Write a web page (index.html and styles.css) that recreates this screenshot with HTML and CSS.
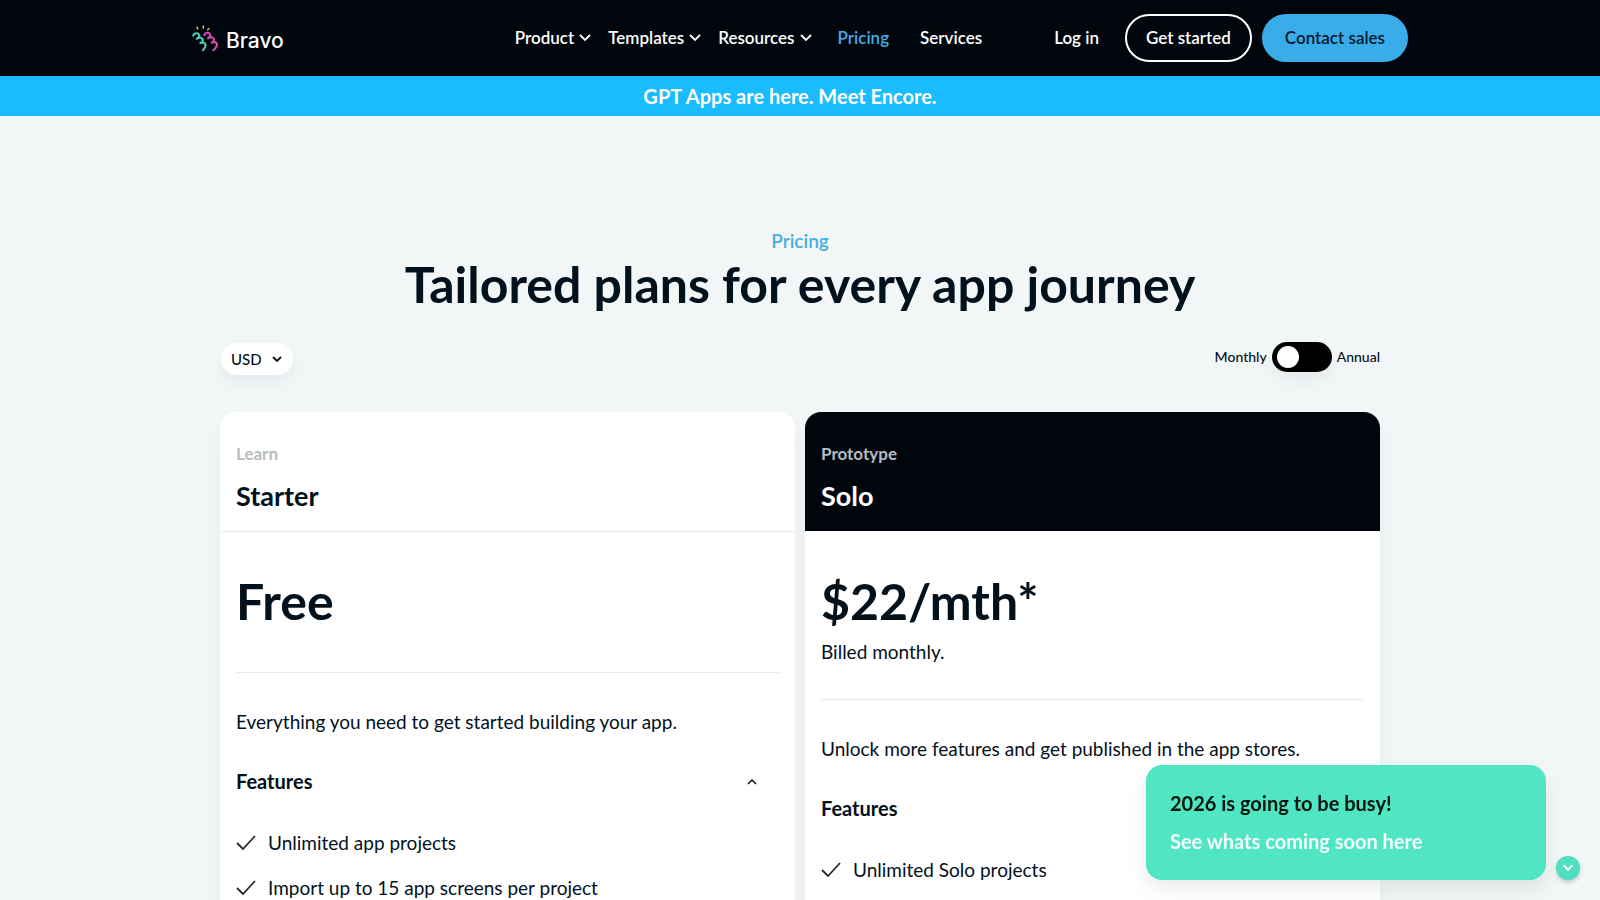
FILE: index.html
```html
<!DOCTYPE html>
<html lang="en">
<head>
<meta charset="utf-8">
<meta name="viewport" content="width=device-width, initial-scale=1">
<title>Bravo Pricing</title>
<link rel="stylesheet" href="styles.css">
</head>
<body>
<header class="header">
  <div class="header-inner">
    <a class="logo" href="#">
      <svg class="logo-mark" viewBox="0 0 28 28" fill="none" stroke-width="2.100" stroke-linecap="round" stroke-linejoin="round" aria-hidden="true">
        <path stroke="#d9b24a" stroke-width="1.600" d="M5 3.200l.8 1.600M11.300 2v2M16.800 4.600l-1 1.200"/>
        <path stroke="#4fcdb0" d="M1.200 11.500c1.200-2.700 5-2.900 5.900-.6.700 1.900-1 3.200-2.300 3.800 2.200-1.900 5.800-1.100 6 1 .2 1.900-1.300 2.900-2.400 3.400 2.200-1.200 5.200-.4 5.200 2.100 0 2-1.500 3.600-2.700 5"/>
        <path stroke="#d34cb4" d="M12.200 11c1.200-2.700 5-2.900 5.900-.6.700 1.900-1 3.200-2.100 3.900 2.200-1.900 5.800-1.100 6 1 .2 1.900-1.300 2.900-2.200 3.400 2.200-1.200 5.200-.4 5.200 2.100 0 2-1.900 3.800-3.600 5.400"/>
      </svg>
      <span>Bravo</span>
    </a>
    <nav class="nav">
      <button class="nav-menu" type="button">Product <svg class="chev" viewBox="0 0 12 8" aria-hidden="true"><path d="M1 1l5 5 5-5"/></svg></button>
      <button class="nav-menu" type="button">Templates <svg class="chev" viewBox="0 0 12 8" aria-hidden="true"><path d="M1 1l5 5 5-5"/></svg></button>
      <button class="nav-menu" type="button">Resources <svg class="chev" viewBox="0 0 12 8" aria-hidden="true"><path d="M1 1l5 5 5-5"/></svg></button>
      <a class="nav-link current" href="#">Pricing</a>
      <a class="nav-link" href="#">Services</a>
    </nav>
    <a class="login" href="#">Log in</a>
    <div class="actions">
      <a class="pill outline" href="#">Get started</a>
      <a class="pill solid" href="#">Contact sales</a>
    </div>
  </div>
</header>
<a class="banner" href="#">GPT Apps are here. Meet Encore.</a>
<main class="main">
  <p class="eyebrow">Pricing</p>
  <h1 class="title">Tailored plans for every app journey</h1>
  <div class="controls">
    <div class="currency">
      <select class="currency-select" aria-label="Currency"><option>USD</option><option>EUR</option></select>
      <svg class="currency-chev" viewBox="0 0 10 7" aria-hidden="true"><path d="M1 1l4 4 4-4"/></svg>
    </div>
    <div class="billing">
      <label for="annual">Monthly</label>
      <input class="switch" id="annual" type="checkbox" role="switch" aria-label="Annual billing">
      <label for="annual">Annual</label>
    </div>
  </div>
  <div class="plans">
    <section class="plan">
      <div class="plan-head">
        <p class="plan-kind">Learn</p>
        <h2 class="plan-name">Starter</h2>
      </div>
      <div class="plan-body">
        <div class="plan-price"><p class="price">Free</p></div>
        <p class="plan-text">Everything you need to get started building your app.</p>
        <button class="features" type="button" aria-expanded="true">Features <svg class="up" viewBox="0 0 10 7" aria-hidden="true"><path d="M1 6l4-4 4 4"/></svg></button>
        <ul class="list">
          <li><svg class="check" viewBox="0 0 20 16" aria-hidden="true"><path d="M1 8l6 6L19 1"/></svg>Unlimited app projects</li>
          <li><svg class="check" viewBox="0 0 20 16" aria-hidden="true"><path d="M1 8l6 6L19 1"/></svg>Import up to 15 app screens per project</li>
        </ul>
      </div>
    </section>
    <section class="plan">
      <div class="plan-head dark">
        <p class="plan-kind">Prototype</p>
        <h2 class="plan-name">Solo</h2>
      </div>
      <div class="plan-body">
        <div class="plan-price"><p class="price">$22/mth*</p><p>Billed monthly.</p></div>
        <p class="plan-text">Unlock more features and get published in the app stores.</p>
        <button class="features" type="button" aria-expanded="true">Features <svg class="up" viewBox="0 0 10 7" aria-hidden="true"><path d="M1 6l4-4 4 4"/></svg></button>
        <ul class="list">
          <li><svg class="check" viewBox="0 0 20 16" aria-hidden="true"><path d="M1 8l6 6L19 1"/></svg>Unlimited Solo projects</li>
        </ul>
      </div>
    </section>
  </div>
</main>
<aside class="notice">
  <div class="toast">
    <p>2026 is going to be busy!</p>
    <a href="#">See whats coming soon here</a>
  </div>
  <button class="toast-close" type="button" aria-label="Minimise"><svg viewBox="0 0 10 7" aria-hidden="true"><path d="M1 1l4 4 4-4"/></svg></button>
</aside>
</body>
</html>
```
FILE: styles.css
```css
* { box-sizing: border-box; }
body {
  margin: 0;
  height: 100vh;
  overflow: hidden;
  background: #f3f6f7;
  color: #02111b;
  font: 400 19px/27px Lato, "Open Sans", sans-serif;
}
p, h1, h2, ul { margin: 0; padding: 0; }
a { color: inherit; text-decoration: none; }
button { border: 0; padding: 0; background: none; color: inherit; font: inherit; cursor: pointer; }
svg { fill: none; stroke: currentColor; flex: none; }

.header { background: #01060d; color: #fff; font-size: 17px; font-weight: 600; line-height: 22px; }
.header-inner {
  display: flex;
  align-items: center;
  max-width: 1216px;
  height: 76px;
  margin: 0 auto;
}
.logo { display: flex; align-items: center; gap: 6px; font: 500 21px/28px Inter, sans-serif; }
.logo-mark { width: 28px; height: 28px; }
.logo span { padding-top: 5px; }
.nav { display: flex; align-items: center; margin-left: auto; }
.nav-menu { display: flex; align-items: center; gap: 5px; margin-right: 17px; }
.chev { width: 12px; height: 8px; stroke-width: 1.8; }
.nav-link { margin-left: 9px; margin-right: 22px; }
.current { color: #45aee9; }
.login { margin-left: 50px; margin-right: 26px; }
.actions { display: flex; gap: 10px; }
.pill { height: 48px; padding: 11px 19px; border: 2px solid #fff; border-radius: 24px; }
.solid { background: #39acea; border-color: #39acea; color: #02182b; padding: 11px 21px; }

.banner { display: block; background: #1abcfe; color: #fff; text-align: center; padding-right: 20px; font-size: 20px; font-weight: 700; line-height: 40px; }

.main { max-width: 1160px; margin: 0 auto; padding-top: 111px; }
.eyebrow { color: #45aee0; text-align: center; font-weight: 600; }
.title { text-align: center; font-size: 50px; line-height: 60px; font-weight: 700; }
.controls { display: flex; justify-content: space-between; align-items: flex-start; padding-top: 28px; height: 98px; }
.currency { display: grid; align-items: center; margin-left: 1px; margin-top: 1px; }
.currency-select {
  grid-area: 1 / 1;
  appearance: none;
  width: 72px;
  height: 32px;
  padding: 0 10px;
  border: 0;
  border-radius: 16px;
  background: #fff;
  color: inherit;
  font: 500 15px/24px Lato, sans-serif;
  box-shadow: 0 8px 16px rgba(20, 20, 40, .05);
}
.currency-chev { grid-area: 1 / 1; justify-self: end; margin-right: 11px; width: 10px; height: 7px; stroke-width: 1.8; pointer-events: none; }
.billing { display: flex; align-items: center; gap: 5px; font-size: 14px; font-weight: 500; line-height: 20px; }
.switch {
  appearance: none;
  width: 60px;
  height: 30px;
  margin: 0;
  padding: 4px 5px;
  border-radius: 15px;
  background: #000;
  box-shadow: 0 8px 16px rgba(20, 20, 40, .05);
}
.switch::before { content: ""; display: block; width: 22px; height: 22px; border-radius: 50%; background: #fff; }
.switch:checked::before { margin-left: auto; }

.plans { display: grid; grid-template-columns: 1fr 1fr; gap: 10px; }
.plan { background: #fff; border-radius: 16px; box-shadow: 0 12px 20px rgba(20, 20, 40, .04); overflow: hidden; }
.plan-head { padding: 30px 16px 15px; height: 120px; border-bottom: 1px solid #e8ebec; }
.plan-kind { font-size: 17px; line-height: 24px; font-weight: 700; color: #b5bdc2; }
.plan-name { font-size: 27px; line-height: 36px; font-weight: 700; margin-top: 12px; }
.dark { background: #01060d; background-clip: padding-box; color: #fff; border-color: #fff; }
.plan-body { padding: 0 16px 48px; }
.plan-price { padding: 33px 0 34px; border-bottom: 1px solid #e8ebec; }
.price { font-size: 50px; line-height: 72px; font-weight: 700; padding-bottom: 1px; }
.plan-text { margin-top: 35px; }
.features { display: flex; justify-content: space-between; align-items: center; width: 100%; margin-top: 33px; padding-right: 22px; font-size: 20px; font-weight: 700; }
.up { width: 10px; height: 7px; stroke-width: 1.5; }
.list { display: grid; gap: 18px; margin-top: 34px; list-style: none; }
.list li { display: flex; align-items: center; gap: 12px; }
.check { width: 20px; height: 16px; stroke: #22282d; stroke-width: 1.8; }

.notice { position: fixed; right: 20px; bottom: 20px; display: flex; align-items: flex-end; gap: 10px; }
.toast {
  display: grid;
  gap: 11px;
  width: 400px;
  padding: 25px 24px;
  border-radius: 16px;
  background: #50e6c3;
  box-shadow: 0 10px 20px rgba(0, 0, 0, .08);
  font-size: 20px;
  font-weight: 700;
  color: #03150f;
}
.toast a { color: #f3fffc; }
.toast-close { display: grid; place-items: center; width: 24px; height: 24px; border-radius: 50%; background: #50dfc0; color: #fff; box-shadow: 0 2px 4px rgba(0, 0, 0, .2); }
.toast-close svg { width: 12px; height: 8px; stroke-width: 1.8; }
```
